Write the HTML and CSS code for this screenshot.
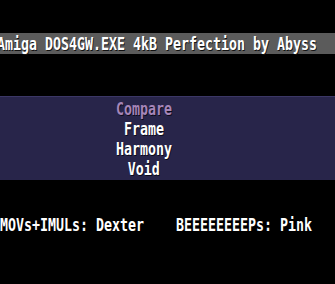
FILE: index.html
```html
<!DOCTYPE html>
<html lang="en">
<head>
<meta charset="UTF-8" />
<meta name="viewport" content="width=device-width, initial-scale=1" />
<title>Amiga DOS4GW.EXE 4kB Perfection by Abyss</title>
<link rel="stylesheet" href="styles.css">
</head>
<body>

<div class="titleBar">
  <span class="topaz">Amiga DOS4GW.EXE 4kB Perfection by Abyss</span>
</div>

<div class="menuPanel">
  <ul class="menu">
    <li class="active"><span class="topaz">Compare</span></li>
    <li><span class="topaz">Frame</span></li>
    <li><span class="topaz">Harmony</span></li>
    <li><span class="topaz">Void</span></li>
  </ul>
</div>

<div class="credits">
  <span class="topaz">MOVs+IMULs: Dexter    BEEEEEEEEPs: Pink</span>
</div>

</body>
</html>
```

FILE: styles.css
```css
body {
  margin: 0;
  background: #000;
  color: #fff;
  font-family: "DejaVu Sans Mono", "Liberation Mono", monospace;
  font-weight: bold;
  font-size: 18px;
  overflow: hidden;
}
.topaz {
  display: inline-block;
  white-space: pre;
  transform: scaleX(0.738);
  transform-origin: left center;
}
.titleBar {
  margin-top: 33px;
  height: 21px;
  line-height: 21px;
  background: #5b5b5b;
  margin-left: -3px;
  white-space: nowrap;
}
.titleBar .topaz {
  text-shadow: 1px 1px 0 #111;
}
.menuPanel {
  margin-top: 42px;
  height: 81px;
  padding-top: 2px;
  background: #28254a;
  border-top: 1px solid #3b3766;
}
.menu {
  list-style: none;
  margin: 0;
  padding: 0;
  width: 288px;
  text-align: center;
  line-height: 20px;
}
.menu .topaz {
  transform-origin: center center;
  text-shadow: 1px 1px 0 #0c0a18;
}
.menu .active {
  color: #a585b8;
}
.credits {
  margin-top: 35px;
  line-height: 20px;
  white-space: nowrap;
}
```
